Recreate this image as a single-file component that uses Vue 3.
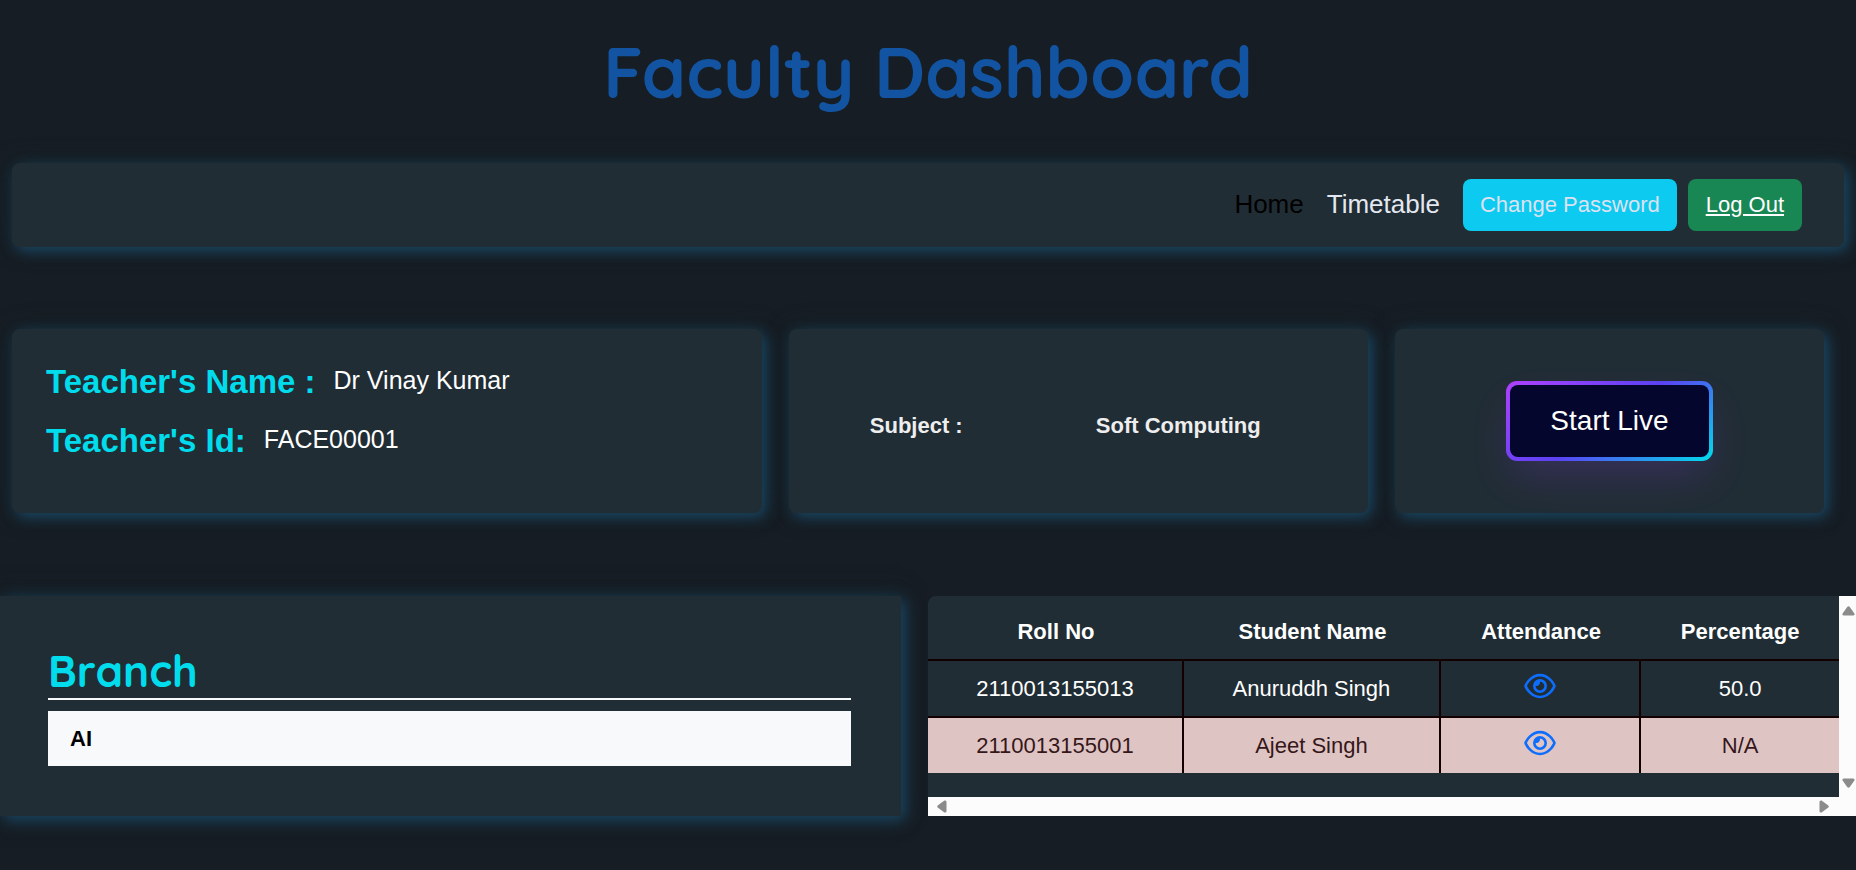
<script setup>
const students = [
  { roll: '2110013155013', name: 'Anuruddh Singh', percentage: '50.0', low: false },
  { roll: '2110013155001', name: 'Ajeet Singh', percentage: 'N/A', low: true },
]
const branches = ['AI']
</script>

<template>
  <div class="page">
    <h1 class="title">Faculty Dashboard</h1>

    <nav class="navbar panel">
      <a class="nav-link active" href="#home">Home</a>
      <a class="nav-link" href="#timetable">Timetable</a>
      <div class="actions">
        <button class="btn info" type="button">Change Password</button>
        <a class="btn success" href="#logout">Log Out</a>
      </div>
    </nav>

    <section class="cards">
      <div class="card panel teacher">
        <div class="field">
          <span class="label">Teacher's Name :</span>
          <span class="value">Dr Vinay Kumar</span>
        </div>
        <div class="field">
          <span class="label">Teacher's Id:</span>
          <span class="value">FACE00001</span>
        </div>
      </div>
      <div class="card panel subject">
        <span>Subject :</span>
        <span>Soft Computing</span>
      </div>
      <div class="card panel live">
        <button class="live-btn" type="button"><span class="live-text">Start Live</span></button>
      </div>
    </section>

    <section class="lower">
      <div class="branch panel">
        <h2 class="branch-title">Branch</h2>
        <a v-for="b in branches" :key="b" class="branch-item" href="#branch">{{ b }}</a>
      </div>

      <div class="roster">
        <div class="table-area">
          <table>
            <colgroup>
              <col class="c-roll" />
              <col class="c-name" />
              <col class="c-att" />
              <col class="c-pct" />
            </colgroup>
            <thead>
              <tr>
                <th>Roll No</th>
                <th>Student Name</th>
                <th>Attendance</th>
                <th>Percentage</th>
              </tr>
            </thead>
            <tbody>
              <tr v-for="s in students" :key="s.roll" :class="{ low: s.low }">
                <td>{{ s.roll }}</td>
                <td>{{ s.name }}</td>
                <td>
                  <a class="eye" href="#attendance" aria-label="View attendance">
                    <svg viewBox="0 0 576 512" aria-hidden="true">
                      <path
                        fill="currentColor"
                        d="M288 80c-65.2 0-118.8 29.6-159.9 67.7C89.6 183.5 63 226 49.4 256c13.6 30 40.2 72.5 78.6 108.3C169.2 402.4 222.8 432 288 432s118.8-29.6 159.9-67.7C486.4 328.5 513 286 526.6 256c-13.6-30-40.2-72.5-78.6-108.3C406.8 109.6 353.2 80 288 80zM95.4 112.6C142.5 68.8 207.2 32 288 32s145.5 36.8 192.6 80.6c46.8 43.5 78.1 95.4 93 131.1c3.3 7.9 3.3 16.7 0 24.6c-14.9 35.7-46.2 87.7-93 131.1C433.5 443.2 368.8 480 288 480s-145.5-36.8-192.6-80.6C48.6 356 17.3 304 2.5 268.3c-3.3-7.9-3.3-16.7 0-24.6C17.3 208 48.6 156 95.4 112.6zM288 336c44.2 0 80-35.8 80-80s-35.8-80-80-80c-.7 0-1.3 0-2 0c1.3 5.1 2 10.5 2 16c0 35.3-28.7 64-64 64c-5.5 0-10.9-.7-16-2c0 .7 0 1.3 0 2c0 44.2 35.8 80 80 80zm0-208a128 128 0 1 1 0 256 128 128 0 1 1 0-256z"
                      />
                    </svg>
                  </a>
                </td>
                <td>{{ s.percentage }}</td>
              </tr>
            </tbody>
          </table>
        </div>
        <div class="bar vertical" aria-hidden="true">
          <svg viewBox="0 0 13 10"><path d="M5.2 1Q6.5-.6 7.8 1L12.4 7.4Q13 9.5 11 9.5H2Q0 9.5 .6 7.4Z" fill="#8b8b8b" /></svg>
          <svg viewBox="0 0 13 10"><path d="M5.2 9Q6.5 10.6 7.8 9L12.4 2.6Q13 .5 11 .5H2Q0 .5 .6 2.6Z" fill="#8b8b8b" /></svg>
        </div>
        <div class="bar horizontal" aria-hidden="true">
          <svg viewBox="0 0 10 13"><path d="M1 5.2Q-.6 6.5 1 7.8L7.4 12.4Q9.5 13 9.5 11V2Q9.5 0 7.4 .6Z" fill="#8b8b8b" /></svg>
          <svg viewBox="0 0 10 13"><path d="M9 5.2Q10.6 6.5 9 7.8L2.6 12.4Q.5 13 .5 11V2Q.5 0 2.6 .6Z" fill="#8b8b8b" /></svg>
        </div>
      </div>
    </section>
  </div>
</template>

<style>
body {
  background: #171d24;
}
</style>

<style scoped>
.page {
  font-family: "Liberation Sans", Arial, sans-serif;
  font-size: 22px;
  line-height: 33px;
  color: #fff;
  overflow: hidden;
  padding-bottom: 54px;
}
.page * {
  box-sizing: border-box;
}
.title {
  margin: 0;
  padding: 30px 0 49px;
  text-align: center;
  font-family: Quicksand, Lato, sans-serif;
  font-weight: 700;
  font-size: 71px;
  line-height: 84px;
  color: #1254a1;
}
.panel {
  background: #212d35;
  box-shadow: 4px 4px 14px #1a4663, 0 0 22px #15262c;
}
.navbar {
  margin: 0 12px;
  padding: 16px 42px;
  border-radius: 8px;
  display: flex;
  justify-content: flex-end;
  align-items: center;
}
.nav-link {
  font-size: 26px;
  color: #e3e8f0;
  text-decoration: none;
  margin-right: 23px;
  padding-bottom: 2px;
}
.nav-link.active {
  color: #000;
}
.actions {
  display: flex;
  gap: 11px;
}
.btn {
  height: 52px;
  padding: 0 18px;
  border: 0;
  border-radius: 8px;
  font: inherit;
  line-height: 52px;
}
.info {
  padding: 0 17px;
  background: #0dcaf0;
  color: #dee2f0;
}
.success {
  background: #198754;
  color: #fff;
}
.cards {
  display: grid;
  grid-template-columns: 750fr 579fr 429fr;
  gap: 27px;
  padding: 82px 32px 83px 12px;
}
.card {
  min-height: 184px;
  border-radius: 8px;
}
.teacher {
  padding: 33px 34px;
}
.field {
  display: flex;
  align-items: flex-start;
  gap: 18px;
  margin-bottom: 19px;
}
.label {
  font-size: 33px;
  font-weight: 700;
  line-height: 40px;
  color: #00dcec;
}
.value {
  font-size: 25px;
  line-height: 36px;
}
.subject {
  display: grid;
  grid-template-columns: 3fr 5fr;
  align-items: center;
  text-align: center;
  padding: 8px 26px 0 29px;
  font-weight: 700;
  color: #eee;
}
.live {
  display: flex;
  justify-content: center;
  align-items: center;
}
.live-btn {
  padding: 4px;
  border: 0;
  border-radius: 11px;
  background: linear-gradient(144deg, #af40ff, #5b42f3 50%, #00ddeb);
  box-shadow: rgba(151, 65, 252, 0.2) 0 20px 41px -7px;
  font: inherit;
  font-size: 28px;
  color: #fff;
}
.live-text {
  display: block;
  padding: 0 40px;
  border-radius: 8px;
  background: #05062d;
  line-height: 72px;
}
.lower {
  display: grid;
  grid-template-columns: minmax(0, 1fr) 50%;
}
.branch {
  margin-right: 27px;
  padding: 48px 50px 50px 48px;
}
.branch-title {
  margin: 0 0 11px;
  border-bottom: 2px solid #f8f9fa;
  font-family: Quicksand, Lato, sans-serif;
  font-size: 44px;
  font-weight: 700;
  line-height: 54px;
  color: #00dcec;
}
.branch-item {
  display: block;
  padding: 11px 22px;
  background: #f8f9fa;
  color: #000;
  font-weight: 700;
  text-decoration: none;
}
.roster {
  display: grid;
  grid-template-columns: minmax(0, 1fr) 17px;
  grid-template-rows: 1fr 19px;
}
.table-area {
  background: #212d35;
  border-top-left-radius: 8px;
}
table {
  width: 100%;
  table-layout: fixed;
  border-collapse: separate;
  border-spacing: 0;
  text-align: center;
}
.c-roll {
  width: 28.1%;
}
.c-name {
  width: 28.2%;
}
.c-att {
  width: 22%;
}
th {
  padding: 19px 0 11px;
  border-bottom: 2px solid #120000;
}
td {
  padding: 11px 0;
  border-right: 2px solid #120000;
  border-bottom: 2px solid #120000;
}
td:last-child {
  border-right: 0;
}
tr:last-child td {
  border-bottom: 0;
}
.low td {
  background: #dfc4c4;
  color: #351719;
}
.eye {
  color: #0d6efd;
}
.eye svg {
  width: 32px;
  height: 28px;
  vertical-align: -4px;
}
.bar {
  background: #fcfcfc;
  display: flex;
  justify-content: space-between;
  align-items: center;
}
.bar svg {
  display: block;
}
.vertical {
  flex-direction: column;
  align-items: flex-end;
  padding: 10px 1px 9px 0;
}
.vertical svg {
  width: 13px;
  height: 10px;
}
.horizontal {
  grid-column: 1 / -1;
  padding: 0 27px 0 9px;
}
.horizontal svg {
  width: 10px;
  height: 13px;
}
</style>
